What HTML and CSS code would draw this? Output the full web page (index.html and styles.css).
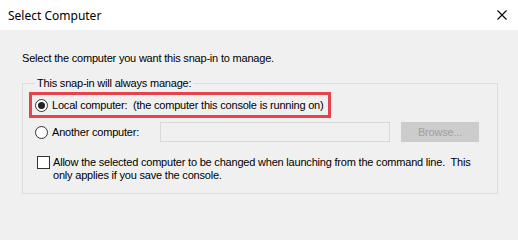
FILE: index.html
```html
<!DOCTYPE html>
<html>
<head>
<meta charset="utf-8">
<link rel="stylesheet" href="styles.css">
</head>
<body>
<div class="window">
  <div class="titlebar">
    <span class="title">Select Computer</span>
    <svg class="close" width="10" height="10" viewBox="0 0 10 10"><path d="M0.5 0.5 L9.5 9.5 M9.5 0.5 L0.5 9.5" stroke="#000" stroke-width="1.1" fill="none"/></svg>
  </div>
  <div class="content">
    <p class="intro">Select the computer you want this snap-in to manage.</p>
    <fieldset class="group">
      <legend class="legend">This snap-in will always manage:</legend>
      <div class="highlight">
        <span class="radio checked"></span>
        <span class="label">Local computer:&nbsp; (the computer this console is running on)</span>
      </div>
      <div class="row">
        <span class="radio"></span>
        <span class="label another">Another computer:</span>
        <span class="textbox"></span>
        <span class="button">Browse...</span>
      </div>
      <div class="checkrow">
        <span class="checkbox"></span>
        <span class="label wrap">Allow the selected computer to be changed when launching from the command line.&nbsp; This<br>only applies if you save the console.</span>
      </div>
    </fieldset>
  </div>
</div>
</body>
</html>
```

FILE: styles.css
```css
html, body {
  margin: 0;
  padding: 0;
}
body {
  width: 518px;
  height: 200px;
  overflow: hidden;
  font-family: "Liberation Sans", Arial, sans-serif;
  font-size: 11px;
  letter-spacing: -0.2px;
  color: #000;
  background: #f0f0f0;
}
.window {
  width: 518px;
  height: 200px;
  display: flex;
  flex-direction: column;
}
.titlebar {
  height: 30px;
  background: #fff;
  display: flex;
  align-items: center;
  justify-content: space-between;
  padding: 0 11px 0 8px;
  box-sizing: border-box;
  flex: none;
}
.title {
  font-family: "Noto Sans", "Liberation Sans", sans-serif;
  font-size: 12px;
  letter-spacing: 0;
  margin-top: 1px;
}
.close {
  display: block;
  margin-top: -1px;
}
.content {
  flex: 1;
  background: #f0f0f0;
  padding: 0 20px 0 22px;
}
.intro {
  margin: 22px 0 0 0;
  line-height: 13px;
}
.group {
  margin: 12px 0 0 0;
  border: 1px solid #dcdcdc;
  padding: 2px 6px 11px 6px;
  width: 476px;
  box-sizing: border-box;
}
.legend {
  padding: 0 2px;
  margin-left: 6px;
  line-height: 13px;
}
.highlight {
  display: flex;
  align-items: center;
  width: 302px;
  height: 26px;
  box-sizing: border-box;
  border: 3px solid #e5444d;
  padding-left: 3px;
  white-space: nowrap;
}
.radio {
  width: 13px;
  height: 13px;
  box-sizing: border-box;
  border: 1px solid #333;
  border-radius: 50%;
  background: #fff;
  display: flex;
  align-items: center;
  justify-content: center;
  flex: none;
}
.radio.checked::after {
  content: "";
  width: 7px;
  height: 7px;
  border-radius: 50%;
  background: #222;
}
.label {
  margin-left: 4px;
  line-height: 13px;
}
.row {
  display: flex;
  align-items: center;
  height: 20px;
  margin-top: 4px;
  padding-left: 6px;
}
.another {
  width: 108px;
}
.textbox {
  width: 230px;
  height: 20px;
  box-sizing: border-box;
  border: 1px solid #d9d9d9;
  background: #f0f0f0;
  flex: none;
}
.button {
  margin-left: 11px;
  width: 78px;
  height: 20px;
  background: #cccccc;
  color: #a0a0a0;
  display: flex;
  align-items: center;
  justify-content: center;
  flex: none;
}
.checkrow {
  display: flex;
  align-items: flex-start;
  margin-top: 14px;
  padding-left: 8px;
}
.checkbox {
  width: 13px;
  height: 13px;
  box-sizing: border-box;
  border: 1px solid #333;
  background: #fff;
  flex: none;
}
.wrap {
  margin-left: 3px;
  white-space: nowrap;
}
```
